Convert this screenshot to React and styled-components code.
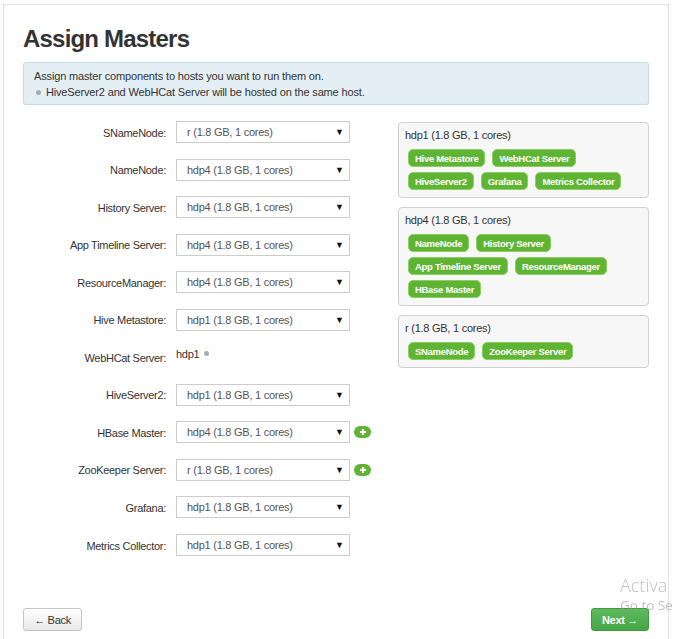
import React from 'react'
import styled, { createGlobalStyle } from 'styled-components'

const GlobalStyle = createGlobalStyle`
  html, body {
    margin: 0;
    padding: 0;
    background: #fff;
    overflow: hidden;
  }
  body {
    font-family: "Liberation Sans", Arial, sans-serif;
    color: #333;
  }
`

const assignments = [
  { label: 'SNameNode', host: 'r (1.8 GB, 1 cores)' },
  { label: 'NameNode', host: 'hdp4 (1.8 GB, 1 cores)' },
  { label: 'History Server', host: 'hdp4 (1.8 GB, 1 cores)' },
  { label: 'App Timeline Server', host: 'hdp4 (1.8 GB, 1 cores)' },
  { label: 'ResourceManager', host: 'hdp4 (1.8 GB, 1 cores)' },
  { label: 'Hive Metastore', host: 'hdp1 (1.8 GB, 1 cores)' },
  { label: 'WebHCat Server', host: 'hdp1', fixed: true },
  { label: 'HiveServer2', host: 'hdp1 (1.8 GB, 1 cores)' },
  { label: 'HBase Master', host: 'hdp4 (1.8 GB, 1 cores)', add: true },
  { label: 'ZooKeeper Server', host: 'r (1.8 GB, 1 cores)', add: true },
  { label: 'Grafana', host: 'hdp1 (1.8 GB, 1 cores)' },
  { label: 'Metrics Collector', host: 'hdp1 (1.8 GB, 1 cores)' },
]

const hosts = [
  { name: 'hdp1 (1.8 GB, 1 cores)', services: ['Hive Metastore', 'WebHCat Server', 'HiveServer2', 'Grafana', 'Metrics Collector'] },
  { name: 'hdp4 (1.8 GB, 1 cores)', services: ['NameNode', 'History Server', 'App Timeline Server', 'ResourceManager', 'HBase Master'] },
  { name: 'r (1.8 GB, 1 cores)', services: ['SNameNode', 'ZooKeeper Server'] },
]

const App = () => {
  return (
    <>
      <GlobalStyle />
      <Panel>
        <Title>Assign Masters</Title>
        <Alert>
          <div>Assign master components to hosts you want to run them on.</div>
          <div><Dot /> HiveServer2 and WebHCat Server will be hosted on the same host.</div>
        </Alert>

        <Main>
          <Form>
            {assignments.map((a) => (
              <Row key={a.label}>
                <Label>{a.label}:</Label>
                {a.fixed ? (
                  <Fixed>{a.host} <Dot /></Fixed>
                ) : (
                  <Select>
                    <span>{a.host}</span>
                    <Arrow>▼</Arrow>
                  </Select>
                )}
                {a.add && (
                  <AddButton>
                    <svg width="8" height="8" viewBox="0 0 8 8">
                      <path d="M4 1v6M1 4h6" stroke="#fff" strokeWidth="2" />
                    </svg>
                  </AddButton>
                )}
              </Row>
            ))}
          </Form>

          <Hosts>
            {hosts.map((h) => (
              <HostBox key={h.name}>
                <HostName>{h.name}</HostName>
                <Chips>
                  {h.services.map((s) => (
                    <Chip key={s}>{s}</Chip>
                  ))}
                </Chips>
              </HostBox>
            ))}
          </Hosts>
        </Main>

        <Footer>
          <Button>← Back</Button>
          <Button primary>Next →</Button>
        </Footer>
      </Panel>
      <Watermark>
        <div className="big">Activa</div>
        <div className="small">Go to Se</div>
      </Watermark>
    </>
  )
}

export default App

const Panel = styled.div`
  box-sizing: border-box;
  width: 666px;
  min-height: 700px;
  margin: 4px 0 0 3px;
  padding: 0 19px;
  border: 1px solid #e3e3e3;
  border-bottom: 0;
  background: #fff;
`

const Title = styled.h2`
  margin: 21px 0 10px;
  font-size: 24px;
  line-height: 26px;
  letter-spacing: -0.8px;
  font-weight: bold;
  color: #333;
`

const Alert = styled.div`
  box-sizing: border-box;
  height: 43px;
  padding: 5px 10px;
  background: #e4eff5;
  border: 1px solid #c4dbe6;
  border-radius: 3px;
  font-size: 11px;
  letter-spacing: -0.15px;
  line-height: 16px;
  color: #333;
`

const Dot = styled.span`
  display: inline-block;
  width: 5px;
  height: 5px;
  border-radius: 50%;
  background: #a3adb3;
  vertical-align: middle;
  margin: 0 2px 2px 2px;
`

const Main = styled.div`
  display: grid;
  grid-template-columns: 375px 251px;
  margin-top: 16px;
  align-items: start;
`

const Form = styled.div`
  display: flex;
  flex-direction: column;
  gap: 15.55px;
`

const Row = styled.div`
  display: grid;
  grid-template-columns: 143px 174px auto;
  column-gap: 10px;
  align-items: center;
  height: 22px;
`

const Label = styled.div`
  text-align: right;
  font-size: 11px;
  letter-spacing: -0.3px;
  color: #333;
  padding-top: 1px;
`

const Select = styled.div`
  box-sizing: border-box;
  height: 22px;
  display: flex;
  align-items: center;
  justify-content: space-between;
  padding: 0 5px 0 10px;
  border: 1px solid #ccc;
  background: #fff;
  font-size: 11px;
  letter-spacing: -0.25px;
  color: #555;
`

const Arrow = styled.span`
  font-size: 9px;
  letter-spacing: 0;
  color: #111;
`

const Fixed = styled.div`
  font-size: 11px;
  letter-spacing: -0.25px;
  color: #333;
  margin-top: -7px;
`

const AddButton = styled.span`
  display: flex;
  align-items: center;
  justify-content: center;
  width: 17px;
  height: 12px;
  margin-left: -6px;
  border-radius: 6px;
  background: #5fb533;
`

const Hosts = styled.div`
  display: flex;
  flex-direction: column;
  gap: 9px;
  margin-top: 1px;
`

const HostBox = styled.div`
  box-sizing: border-box;
  padding: 5px 6px 7px;
  border: 1px solid #d0d0d0;
  border-radius: 4px;
  background: #f7f7f7;
`

const HostName = styled.div`
  font-size: 11px;
  letter-spacing: -0.25px;
  line-height: 14px;
  color: #333;
  margin-bottom: 7px;
`

const Chips = styled.div`
  display: flex;
  flex-wrap: wrap;
  gap: 5px 7px;
  padding-left: 3px;
`

const Chip = styled.span`
  box-sizing: border-box;
  height: 18px;
  display: inline-flex;
  align-items: center;
  padding: 0 6px;
  background: #5fb533;
  border: 1px solid #8ccf63;
  border-radius: 5px;
  color: #fff;
  font-size: 9.5px;
  letter-spacing: -0.3px;
  font-weight: bold;
`

const Footer = styled.div`
  display: flex;
  justify-content: space-between;
  margin-top: 52px;
`

const Button = styled.button`
  box-sizing: border-box;
  height: 23px;
  padding: 0;
  white-space: nowrap;
  border-radius: 3px;
  font-family: inherit;
  font-size: 11px;
  letter-spacing: -0.3px;
  font-weight: ${(p) => (p.primary ? 'bold' : 'normal')};
  color: ${(p) => (p.primary ? '#fff' : '#333')};
  border: 1px solid ${(p) => (p.primary ? '#3e9a3e' : '#c4c4c4')};
  background: ${(p) =>
    p.primary
      ? 'linear-gradient(#5dbb5d, #46a546)'
      : 'linear-gradient(#ffffff, #e8e8e8)'};
  width: ${(p) => (p.primary ? '58px' : '59px')};
`

const Watermark = styled.div`
  position: fixed;
  left: 620px;
  top: 573px;
  white-space: nowrap;
  pointer-events: none;
  font-family: "Open Sans", "Noto Sans", sans-serif;
  color: rgba(150, 150, 150, 0.6);

  .big {
    font-size: 18px;
    font-weight: 300;
    line-height: 24px;
  }
  .small {
    font-size: 13.5px;
    line-height: 16px;
    margin-top: 0;
  }
`
